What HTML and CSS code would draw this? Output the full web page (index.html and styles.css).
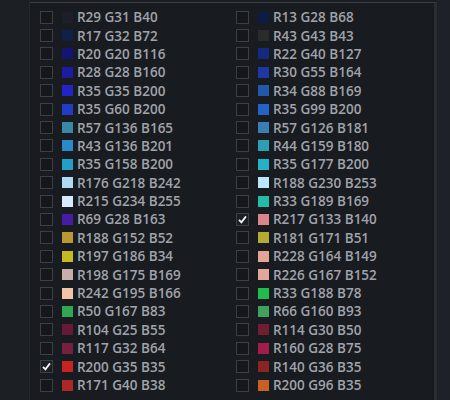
FILE: index.html
```html
<!DOCTYPE html>
<html lang="en">
<head>
    <meta charset="UTF-8">
    <meta name="viewport" content="width=device-width, initial-scale=1.0">
    <title>Colour list</title>
    <link rel="stylesheet" href="styles.css">
</head>
<body>
    <div class="frame">
        <div class="gutter"></div>
        <div class="panel">
            <div class="list">
                <label class="item"><span class="box"></span><span class="swatch" style="background: rgb(29,31,40)"></span><span class="name">R29 G31 B40</span></label>
                <label class="item"><span class="box"></span><span class="swatch" style="background: rgb(13,28,68)"></span><span class="name">R13 G28 B68</span></label>
                <label class="item"><span class="box"></span><span class="swatch" style="background: rgb(17,32,72)"></span><span class="name">R17 G32 B72</span></label>
                <label class="item"><span class="box"></span><span class="swatch" style="background: rgb(43,43,43)"></span><span class="name">R43 G43 B43</span></label>
                <label class="item"><span class="box"></span><span class="swatch" style="background: rgb(20,20,116)"></span><span class="name">R20 G20 B116</span></label>
                <label class="item"><span class="box"></span><span class="swatch" style="background: rgb(22,40,127)"></span><span class="name">R22 G40 B127</span></label>
                <label class="item"><span class="box"></span><span class="swatch" style="background: rgb(28,28,160)"></span><span class="name">R28 G28 B160</span></label>
                <label class="item"><span class="box"></span><span class="swatch" style="background: rgb(30,55,164)"></span><span class="name">R30 G55 B164</span></label>
                <label class="item"><span class="box"></span><span class="swatch" style="background: rgb(35,35,200)"></span><span class="name">R35 G35 B200</span></label>
                <label class="item"><span class="box"></span><span class="swatch" style="background: rgb(34,88,169)"></span><span class="name">R34 G88 B169</span></label>
                <label class="item"><span class="box"></span><span class="swatch" style="background: rgb(35,60,200)"></span><span class="name">R35 G60 B200</span></label>
                <label class="item"><span class="box"></span><span class="swatch" style="background: rgb(35,99,200)"></span><span class="name">R35 G99 B200</span></label>
                <label class="item"><span class="box"></span><span class="swatch" style="background: rgb(57,136,165)"></span><span class="name">R57 G136 B165</span></label>
                <label class="item"><span class="box"></span><span class="swatch" style="background: rgb(57,126,181)"></span><span class="name">R57 G126 B181</span></label>
                <label class="item"><span class="box"></span><span class="swatch" style="background: rgb(43,136,201)"></span><span class="name">R43 G136 B201</span></label>
                <label class="item"><span class="box"></span><span class="swatch" style="background: rgb(44,159,180)"></span><span class="name">R44 G159 B180</span></label>
                <label class="item"><span class="box"></span><span class="swatch" style="background: rgb(35,158,200)"></span><span class="name">R35 G158 B200</span></label>
                <label class="item"><span class="box"></span><span class="swatch" style="background: rgb(35,177,200)"></span><span class="name">R35 G177 B200</span></label>
                <label class="item"><span class="box"></span><span class="swatch" style="background: rgb(176,218,242)"></span><span class="name">R176 G218 B242</span></label>
                <label class="item"><span class="box"></span><span class="swatch" style="background: rgb(188,230,253)"></span><span class="name">R188 G230 B253</span></label>
                <label class="item"><span class="box"></span><span class="swatch" style="background: rgb(215,234,255)"></span><span class="name">R215 G234 B255</span></label>
                <label class="item"><span class="box"></span><span class="swatch" style="background: rgb(33,189,169)"></span><span class="name">R33 G189 B169</span></label>
                <label class="item"><span class="box"></span><span class="swatch" style="background: rgb(69,28,163)"></span><span class="name">R69 G28 B163</span></label>
                <label class="item"><span class="box checked"><svg viewBox="0 0 13 13" width="13" height="13"><path d="M3 6.8 L5.4 9.4 L10 3.4" fill="none" stroke="#f2f2f2" stroke-width="1.8"/></svg></span><span class="swatch" style="background: rgb(217,133,140)"></span><span class="name">R217 G133 B140</span></label>
                <label class="item"><span class="box"></span><span class="swatch" style="background: rgb(188,152,52)"></span><span class="name">R188 G152 B52</span></label>
                <label class="item"><span class="box"></span><span class="swatch" style="background: rgb(181,171,51)"></span><span class="name">R181 G171 B51</span></label>
                <label class="item"><span class="box"></span><span class="swatch" style="background: rgb(197,186,34)"></span><span class="name">R197 G186 B34</span></label>
                <label class="item"><span class="box"></span><span class="swatch" style="background: rgb(228,164,149)"></span><span class="name">R228 G164 B149</span></label>
                <label class="item"><span class="box"></span><span class="swatch" style="background: rgb(198,175,169)"></span><span class="name">R198 G175 B169</span></label>
                <label class="item"><span class="box"></span><span class="swatch" style="background: rgb(226,167,152)"></span><span class="name">R226 G167 B152</span></label>
                <label class="item"><span class="box"></span><span class="swatch" style="background: rgb(242,195,166)"></span><span class="name">R242 G195 B166</span></label>
                <label class="item"><span class="box"></span><span class="swatch" style="background: rgb(33,188,78)"></span><span class="name">R33 G188 B78</span></label>
                <label class="item"><span class="box"></span><span class="swatch" style="background: rgb(50,167,83)"></span><span class="name">R50 G167 B83</span></label>
                <label class="item"><span class="box"></span><span class="swatch" style="background: rgb(66,160,93)"></span><span class="name">R66 G160 B93</span></label>
                <label class="item"><span class="box"></span><span class="swatch" style="background: rgb(104,25,55)"></span><span class="name">R104 G25 B55</span></label>
                <label class="item"><span class="box"></span><span class="swatch" style="background: rgb(114,30,50)"></span><span class="name">R114 G30 B50</span></label>
                <label class="item"><span class="box"></span><span class="swatch" style="background: rgb(117,32,64)"></span><span class="name">R117 G32 B64</span></label>
                <label class="item"><span class="box"></span><span class="swatch" style="background: rgb(160,28,75)"></span><span class="name">R160 G28 B75</span></label>
                <label class="item"><span class="box checked"><svg viewBox="0 0 13 13" width="13" height="13"><path d="M3 6.8 L5.4 9.4 L10 3.4" fill="none" stroke="#f2f2f2" stroke-width="1.8"/></svg></span><span class="swatch" style="background: rgb(200,35,35)"></span><span class="name">R200 G35 B35</span></label>
                <label class="item"><span class="box"></span><span class="swatch" style="background: rgb(140,36,35)"></span><span class="name">R140 G36 B35</span></label>
                <label class="item"><span class="box"></span><span class="swatch" style="background: rgb(171,40,38)"></span><span class="name">R171 G40 B38</span></label>
                <label class="item"><span class="box"></span><span class="swatch" style="background: rgb(200,96,35)"></span><span class="name">R200 G96 B35</span></label>
            </div>
        </div>
        <div class="side"></div>
    </div>
</body>
</html>
```

FILE: styles.css
```css
body {
    margin: 0;
    padding: 0;
    background: #1b1e23;
    font-family: 'Open Sans', 'Noto Sans', sans-serif;
    overflow: hidden;
}
.frame {
    display: flex;
    height: 400px;
}
.gutter {
    width: 29px;
    background: #1c1f24;
    border-right: 1px solid #24272c;
}
.panel {
    width: 404px;
    background: #181b20;
    border-top: 1px solid #3a3d43;
    border-right: 3px solid #2a2d32;
    margin-top: 2px;
    overflow: hidden;
}
.list {
    display: grid;
    grid-template-columns: 196px 196px;
    grid-auto-rows: 18.4px;
    padding: 5px 0 0 10px;
}
.item {
    display: flex;
    align-items: center;
}
.box {
    width: 11px;
    height: 11px;
    border: 1px solid #3c3f45;
    background: #15171b;
    margin-right: 9px;
    display: flex;
    align-items: center;
    justify-content: center;
}
.box.checked {
    background: #1c1f24;
}
.box svg {
    flex: none;
}
.swatch {
    width: 11px;
    height: 11px;
    margin-right: 4px;
}
.name {
    color: #a0a3aa;
    font-size: 13.5px;
    font-weight: 600;
    white-space: nowrap;
}
.side {
    flex: 1;
    background: #1e2127;
}
```
